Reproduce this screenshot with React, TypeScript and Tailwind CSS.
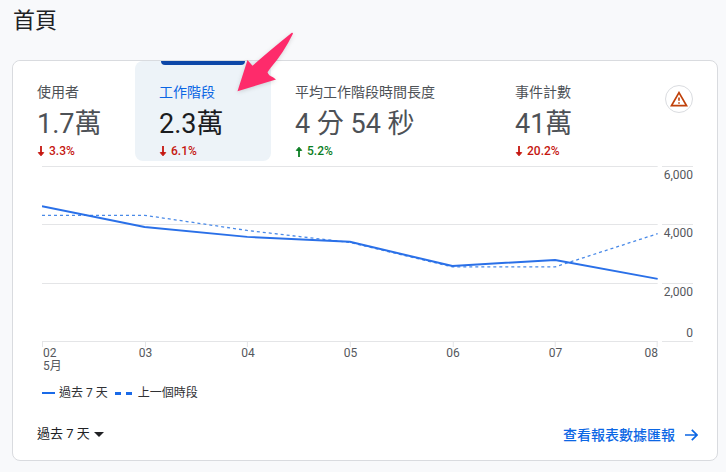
import { useState } from 'react';
import clsx from 'clsx';

type Trend = 'up' | 'down';

interface Metric {
  id: string;
  label: string;
  value: string;
  trend: Trend;
  change: string;
}

const METRICS: Metric[] = [
  { id: 'users', label: '使用者', value: '1.7萬', trend: 'down', change: '3.3%' },
  { id: 'sessions', label: '工作階段', value: '2.3萬', trend: 'down', change: '6.1%' },
  { id: 'duration', label: '平均工作階段時間長度', value: '4 分 54 秒', trend: 'up', change: '5.2%' },
  { id: 'events', label: '事件計數', value: '41萬', trend: 'down', change: '20.2%' },
];

const DAYS = ['02', '03', '04', '05', '06', '07', '08'];
const CURRENT = [4620, 3910, 3570, 3400, 2570, 2780, 2130];
const PREVIOUS = [4310, 4310, 3790, 3380, 2540, 2540, 3680];

const MAX = 6000;
const PLOT_WIDTH = 616;
const PLOT_HEIGHT = 175;
const GRID_LINES = [0, 58, 117, 175];

const toPoints = (series: number[]) =>
  series
    .map((v, i) => `${(i * PLOT_WIDTH) / (series.length - 1)},${PLOT_HEIGHT - (v / MAX) * PLOT_HEIGHT}`)
    .join(' ');

const TrendArrow = ({ trend }: { trend: Trend }) => (
  <svg
    className={clsx('h-[11px] w-2', trend === 'up' && 'rotate-180')}
    viewBox="0 0 8 11"
    fill="none"
    stroke="currentColor"
    strokeWidth="1.8"
    aria-hidden="true"
  >
    <path d="M4 0v8" />
    <path d="M1.3 6.6h5.4L4 9.8z" fill="currentColor" strokeWidth="1" />
  </svg>
);

// Hand-drawn style pointer over the sessions tab
const Pointer = () => (
  <svg
    className="pointer-events-none absolute -top-[29px] left-[101px] z-10 h-[62px] w-[60px] drop-shadow-sm"
    viewBox="0 0 60 62"
    aria-hidden="true"
  >
    <path
      d="M55.8 .8Q57.3 .5 56.8 2Q47.5 21 34.5 36Q33 38 31.5 40.2Q32.5 43.5 37 45.2L40 47.5L1.5 59.2L11.5 28L16.5 33.8Q32 20 55.8 .8Z"
      fill="#fe2b6b"
    />
  </svg>
);

const MetricTab = ({ metric, active, onSelect }: { metric: Metric; active: boolean; onSelect: () => void }) => (
  <div className="relative flex">
    <button
      type="button"
      role="tab"
      aria-selected={active}
      onClick={onSelect}
      className={clsx(
        'relative w-full rounded-lg px-6 pt-[21px] pb-0.5 text-left whitespace-nowrap',
        active ? 'bg-[#edf3f8]' : 'bg-white'
      )}
    >
      {active && <span className="absolute inset-x-[26px] top-0 h-1 rounded-b bg-[#0d47a8]" />}
      <span className={clsx('block text-sm leading-5', active ? 'text-[#0b66e4]' : 'text-[#4d5156]')}>
        {metric.label}
      </span>
      <span
        className={clsx('mt-0.5 block text-[27px] leading-10', active ? 'text-[#1b1c1f]' : 'text-[#4d5156]')}
      >
        {metric.value}
      </span>
      <span
        className={clsx(
          'flex items-center gap-1 text-xs leading-[15px] font-medium',
          metric.trend === 'up' ? 'text-[#0a7d22]' : 'text-[#c5160f]'
        )}
      >
        <TrendArrow trend={metric.trend} />
        {metric.change}
      </span>
    </button>
    {metric.id === 'sessions' && <Pointer />}
  </div>
);

const WarningButton = () => (
  <button
    type="button"
    aria-label="警告"
    className="flex size-7 items-center justify-center rounded-full border border-[#dadce0] bg-white"
  >
    <svg className="h-4 w-[18px]" viewBox="0 0 18 16" fill="none" stroke="#c0410a" aria-hidden="true">
      <path d="M9 1.6L16.6 14.7H1.4Z" strokeWidth="1.7" />
      <path d="M9 6.5v3.3M9 11.2v1.5" strokeWidth="1.6" />
    </svg>
  </button>
);

const TrendChart = () => (
  <div className="pr-6 pl-[29px] text-xs text-[#55585d]">
    <div className="flex gap-1">
      <svg
        className="h-[181px] min-w-0 flex-1"
        viewBox="0 0 616 181"
        preserveAspectRatio="none"
        fill="none"
        role="img"
        aria-label="工作階段"
      >
        {GRID_LINES.map((y) => (
          <path key={y} d={`M0 ${y + 0.5}H616`} stroke="#e4e5e7" vectorEffect="non-scaling-stroke" />
        ))}
        {DAYS.map((day, i) => (
          <path
            key={day}
            d={`M${Math.min(Math.round((i * PLOT_WIDTH) / 6) + 0.5, 615.5)} 175v6`}
            stroke="#e4e5e7"
            vectorEffect="non-scaling-stroke"
          />
        ))}
        <polyline
          points={toPoints(PREVIOUS)}
          stroke="#4a8ae8"
          strokeWidth="1.3"
          strokeDasharray="3 3"
          vectorEffect="non-scaling-stroke"
        />
        <polyline
          points={toPoints(CURRENT)}
          stroke="#2a70e8"
          strokeWidth="2"
          strokeLinejoin="round"
          vectorEffect="non-scaling-stroke"
        />
      </svg>
      <div className="flex h-[176px] flex-col text-right leading-4">
        <div className="h-[58px] border-t border-[#e4e5e7] pl-0.5">6,000</div>
        <div className="h-[59px] border-t border-[#e4e5e7]">4,000</div>
        <div className="flex flex-1 flex-col justify-between border-y border-[#e4e5e7]">
          <span>2,000</span>
          <span>0</span>
        </div>
      </div>
    </div>
    <div className="mr-[35px] flex justify-between leading-[13px]">
      {DAYS.map((day, i) => (
        <div
          key={day}
          className={clsx(
            'flex flex-col',
            i === 0 && 'flex-1 items-start pl-px',
            i > 0 && i < 6 && 'flex-2 items-center',
            i === 6 && 'flex-1 items-end'
          )}
        >
          <span>{day}</span>
          {i === 0 && <span>5月</span>}
        </div>
      ))}
    </div>
  </div>
);

const Legend = () => (
  <div className="mt-3 flex items-center pl-[29px] text-xs leading-4 text-[#303134]">
    <span className="mr-1 h-0.5 w-[13px] bg-[#1a6ae8]" />
    <span>過去 7 天</span>
    <span className="mr-1.5 ml-[7px] flex gap-[5px]">
      <span className="h-[3px] w-1.5 bg-[#1a6ae8]" />
      <span className="h-[3px] w-1.5 bg-[#1a6ae8]" />
    </span>
    <span>上一個時段</span>
  </div>
);

export default function App() {
  const [selected, setSelected] = useState('sessions');

  return (
    <main className="min-h-screen bg-[#f8f9fb] pt-1.5 pr-2 pb-2.5 pl-3 font-[Roboto,'Noto_Sans_CJK_TC',sans-serif]">
      <h1 className="mb-6 pl-px text-[22px] leading-[30px] text-[#202124]">首頁</h1>

      <section className="rounded-lg border border-[#d9dbdf] bg-white">
        <div
          role="tablist"
          className="mb-[5px] grid grid-cols-[122fr_136fr_220fr_154fr_72fr]"
        >
          {METRICS.map((metric) => (
            <MetricTab
              key={metric.id}
              metric={metric}
              active={metric.id === selected}
              onSelect={() => setSelected(metric.id)}
            />
          ))}
          <div className="flex items-start justify-end pt-6 pr-6">
            <WarningButton />
          </div>
        </div>

        <TrendChart />
        <Legend />

        <footer className="mt-[23px] flex items-start justify-between pr-[19px] pb-3.5 pl-6">
          <div className="relative flex items-center gap-1">
            <select
              aria-label="日期範圍"
              className="field-sizing-content appearance-none bg-transparent text-[13px] leading-5 text-[#202124]"
            >
              <option>過去 7 天</option>
              <option>過去 28 天</option>
            </select>
            <svg className="pointer-events-none h-[5px] w-[10px]" viewBox="0 0 10 5" aria-hidden="true">
              <path d="M0 0h10L5 5z" fill="#202124" />
            </svg>
          </div>
          <a href="#" className="flex items-center gap-2.5 text-sm leading-[22px] font-medium text-[#0b66e4]">
            查看報表數據匯報
            <svg
              className="h-3 w-[13px]"
              viewBox="0 0 13 12"
              fill="none"
              stroke="currentColor"
              strokeWidth="1.7"
              aria-hidden="true"
            >
              <path d="M0 6h12M6.8.8L12 6l-5.2 5.2" />
            </svg>
          </a>
        </footer>
      </section>
    </main>
  );
}
